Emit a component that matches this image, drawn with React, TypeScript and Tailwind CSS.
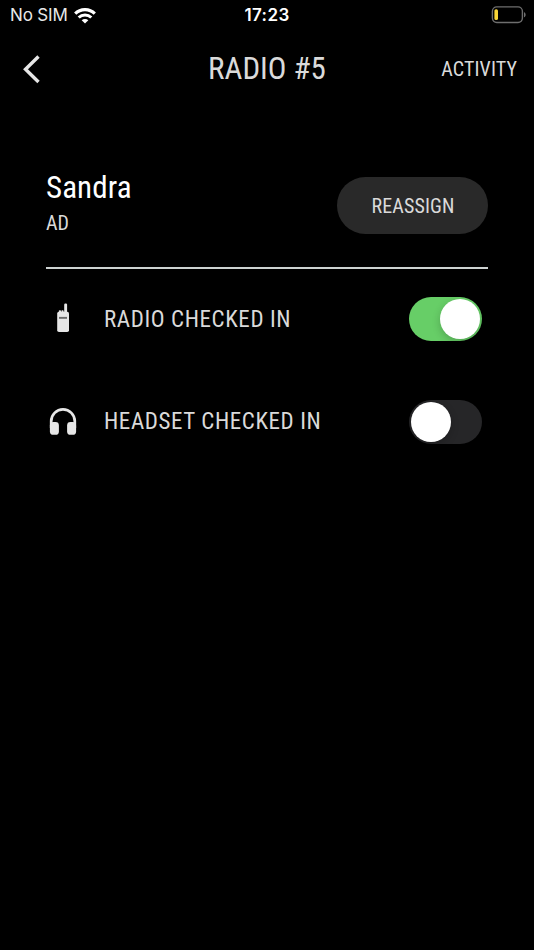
import React, { useState } from "react";

function WifiIcon() {
  return (
    <svg width="22" height="16" viewBox="0 0 22 16" fill="none" stroke="#fff">
      <path d="M1.2 5.6a14 14 0 0 1 19.6 0" strokeWidth="3.2" />
      <path d="M4.7 9.5a9 9 0 0 1 12.6 0" strokeWidth="3" />
      <path d="M11 15.6l-3.3-3.3a4.7 4.7 0 0 1 6.6 0z" fill="#fff" stroke="none" />
    </svg>
  );
}

function BatteryIcon() {
  return (
    <svg width="36" height="18" viewBox="0 0 36 18" fill="none">
      <rect x="2.4" y="0.9" width="30" height="15.6" rx="4.4" stroke="#6e6e6e" strokeWidth="1.4" />
      <rect x="4.4" y="3.2" width="3.6" height="10.8" rx="1.6" fill="#fbd737" />
      <path d="M34 6.2c2.2.6 2.2 4.4 0 5z" fill="#6e6e6e" />
    </svg>
  );
}

function RadioIcon() {
  return (
    <svg width="34" height="34" viewBox="0 0 34 34" fill="#e6e6e6">
      <rect x="18.2" y="1.6" width="2.9" height="10" rx="1.2" />
      <rect x="12.8" y="8.3" width="2.2" height="3" rx="0.8" />
      <rect x="15.4" y="8.3" width="2.2" height="3" rx="0.8" />
      <rect x="11.2" y="9.8" width="11.8" height="20.2" rx="1.8" />
      <rect x="13" y="14.9" width="8" height="1.9" fill="#6b6b6b" />
    </svg>
  );
}

function HeadsetIcon() {
  return (
    <svg width="34" height="34" viewBox="0 0 34 34" fill="#e6e6e6">
      <path d="M5.2 23V16.2a11.8 11.8 0 0 1 23.6 0V23" fill="none" stroke="#e6e6e6" strokeWidth="2.7" />
      <rect x="3.9" y="17" width="9" height="12.8" rx="3.4" />
      <rect x="21.1" y="17" width="9" height="12.8" rx="3.4" />
    </svg>
  );
}

interface ToggleProps {
  checked: boolean;
  label: string;
  onChange: () => void;
}

function Toggle({ checked, label, onChange }: ToggleProps) {
  return (
    <button
      role="switch"
      aria-checked={checked}
      aria-label={label}
      onClick={onChange}
      className={`flex h-11 w-[73px] items-center rounded-full px-0.5 ${
        checked ? "justify-end bg-[#67ce67]" : "justify-start bg-[#262628]"
      }`}
    >
      <span className="size-10 rounded-full bg-white shadow-[0_3px_8px_rgba(0,0,0,0.2)]" />
    </button>
  );
}

function App() {
  const [radioIn, setRadioIn] = useState<boolean>(true);
  const [headsetIn, setHeadsetIn] = useState<boolean>(false);

  return (
    <div className="flex min-h-screen flex-col bg-black text-[#dadada] font-['Roboto_Condensed',Roboto,sans-serif] font-normal font-stretch-condensed">
      {/* Status bar */}
      <div className="grid h-[30px] grid-cols-3 items-center pl-2.5 pr-2 font-['Inter',sans-serif] text-white font-stretch-normal">
        <div className="flex items-center gap-1.5 pt-0.5">
          <span className="text-[17px] font-normal text-[#e8e8e8] tracking-[-0.15px]">No SIM</span>
          <WifiIcon />
        </div>
        <span className="pt-0.5 pr-0.5 text-center text-[17px] font-semibold tracking-[0.4px]">17:23</span>
        <div className="flex justify-end">
          <BatteryIcon />
        </div>
      </div>

      {/* Header */}
      <header className="grid h-[78px] grid-cols-3 items-center pl-[22px] pr-[17px]">
        <button aria-label="Back">
          <svg width="20" height="30" viewBox="0 0 20 30" fill="none">
            <path d="M16.5 2.5L3.5 15.3l13 12.7" stroke="#e6e6e6" strokeWidth="3.4" />
          </svg>
        </button>
        <h1 className="pr-[5px] text-center text-[31px] whitespace-nowrap">RADIO #5</h1>
        <button className="text-right text-xl tracking-[0.1px]">ACTIVITY</button>
      </header>

      <main className="px-[46px] pt-[61px]">
        <section className="flex h-[100px] items-start justify-between border-b-2 border-[#cdd2d1]">
          <div>
            <h2 className="text-[31px] leading-[38px] tracking-[0.1px] text-white">Sandra</h2>
            <p className="text-xl leading-8">AD</p>
          </div>
          <button className="mt-2 h-[57px] w-[151px] rounded-full bg-[#292929] pl-px text-xl tracking-[0.1px]">
            REASSIGN
          </button>
        </section>

        <div className="mt-7 flex h-11 items-center pr-1.5">
          <RadioIcon />
          <span className="ml-6 flex-1 pt-0.5 text-[23px] tracking-[0.6px]">RADIO CHECKED IN</span>
          <Toggle checked={radioIn} label="Radio checked in" onChange={() => setRadioIn(!radioIn)} />
        </div>

        <div className="mt-[59px] flex h-11 items-center pr-1.5">
          <HeadsetIcon />
          <span className="ml-6 flex-1 text-[23px] tracking-[0.6px]">HEADSET CHECKED IN</span>
          <Toggle checked={headsetIn} label="Headset checked in" onChange={() => setHeadsetIn(!headsetIn)} />
        </div>
      </main>
    </div>
  );
}

export default App;
